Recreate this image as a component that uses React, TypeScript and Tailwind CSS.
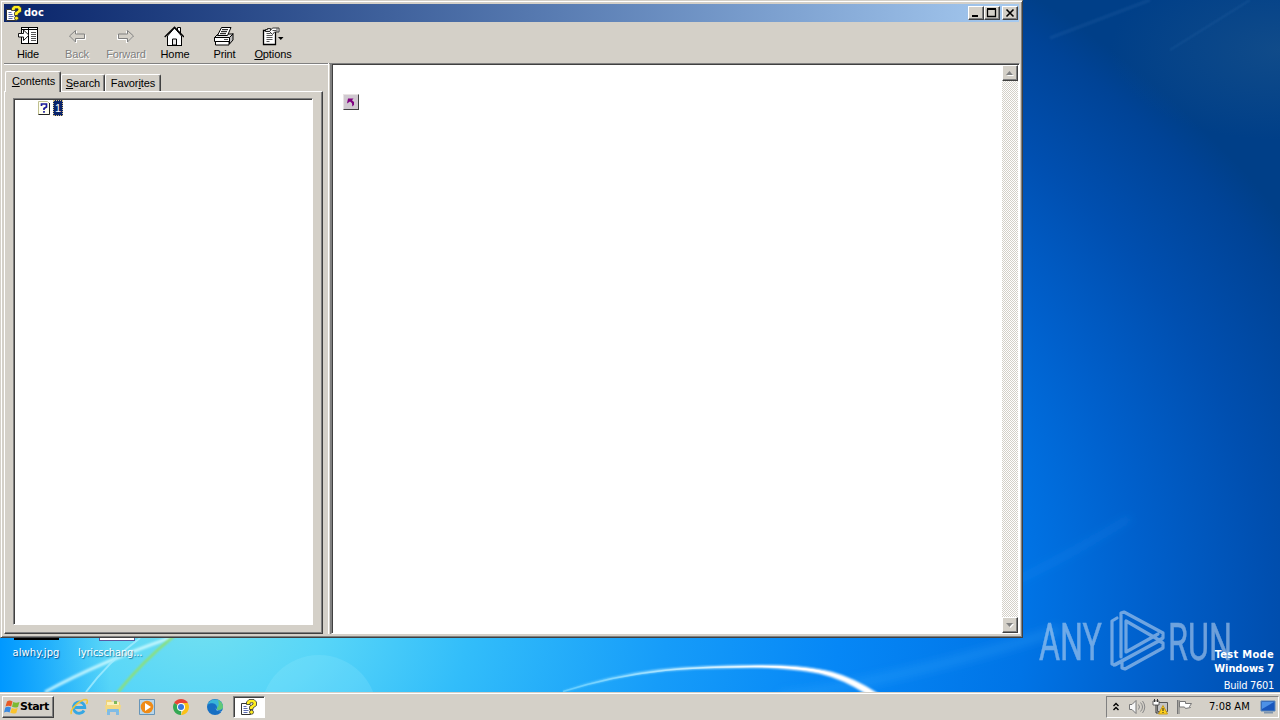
import type { ReactNode } from 'react'

const uiFont = "font-['Liberation_Sans',sans-serif] text-[11px] leading-[13px] tracking-[-0.1px]"
const tahoma = "font-['DejaVu_Sans_Condensed','DejaVu_Sans',sans-serif]"
const raised = 'border border-t-white border-l-white border-r-[#404040] border-b-[#404040] bg-[#d4d0c8] shadow-[inset_-1px_-1px_0_#808080]'
const sunken = 'border border-t-[#808080] border-l-[#808080] border-r-white border-b-white shadow-[inset_1px_1px_0_#404040]'

// Yellow question mark over a page, used by the title bar and the taskbar
function HelpIcon() {
  return (
    <svg width="17" height="16" viewBox="0 0 17 16" className="shrink-0">
      <path d="M.500 4.500h7l2 2v9h-9z" fill="#fff" stroke="#333" />
      <path d="M2.500 7.500h3M2.500 9.500h4M2.500 11.500h5M2.500 13.500h4" stroke="#5a6ab0" />
      <path d="M5.500 5.500V3l2.500-2.500h5L15.500 3v3.500l-3.500 2.500v1.500H8.500V7.500L12 5.200V3.800h-2.800v1.700z" fill="#ffee20" stroke="#333" strokeWidth=".8" />
      <circle cx="10.500" cy="13.200" r="2" fill="#ffee20" stroke="#333" strokeWidth=".8" />
    </svg>
  )
}

function HideIcon() {
  return (
    <svg width="20" height="20" viewBox="0 0 20 20">
      <g shapeRendering="crispEdges">
        <path d="M3 1h17v17H3z" fill="#fff" />
        <path d="M3.500 1.500h16v16h-16zM10.500 1v16M3 3.500h17" fill="none" stroke="#000" />
        <path d="M13 6.500h5M13 8.500h5M13 10.500h5M13 12.500h5M13 14.500h5" stroke="#555" />
        <path d="M0 7h4v4H0z" fill="#d4d0c8" />
      </g>
      <path d="M.500 7.500h5V4l5.500 5.200-5.500 5.300V11h-5z" fill="#fff" stroke="#000" strokeWidth=".9" />
    </svg>
  )
}

function ArrowIcon({ flip }: { flip?: boolean }) {
  return (
    <svg width="20" height="20" viewBox="0 0 20 20" className={flip ? '-scale-x-100' : ''}>
      <path d="M3.500 11l6-6v4h9v4.500h-9V17z" fill="none" stroke="#fff" />
      <path d="M2.500 10l6-5.500v3.500h9v4.500h-9v3.500z" fill="#d4d0c8" stroke="#808080" />
    </svg>
  )
}

function HomeIcon() {
  return (
    <svg width="20" height="20" viewBox="0 0 20 20" className="-ml-[2px]">
      <path d="M13.500 6V1.500h3V9" fill="#fff" stroke="#000" />
      <path d="M3.500 10v9.500h14V10l-7-8z" fill="#fff" stroke="#000" />
      <path d="M.700 11L10.500 1.200 20 11" fill="none" stroke="#000" strokeWidth="1.300" />
      <path d="M8.500 19v-6h4v6z" fill="#e8e8e8" stroke="#000" />
      <path d="M3 19.500h15" stroke="#000" />
    </svg>
  )
}

function PrintIcon() {
  return (
    <svg width="21" height="20" viewBox="0 0 21 20" className="-ml-[2px]">
      <path d="M16.500 11.500l3.500-4v6.500l-3.500 4z" fill="#bbb" stroke="#000" />
      <path d="M1.500 11.500l3.500-3.500h15l-3.500 3.500z" fill="#e4e4e4" stroke="#000" />
      <path d="M4.500 9.500l4-8h9.500l-3.500 8z" fill="#fff" stroke="#000" />
      <path d="M9 3.700h6M8 5.700h6M7 7.700h6" stroke="#000" />
      <path d="M1.500 11.500h15v4h-15z" fill="#fff" stroke="#000" />
      <path d="M2.500 15.500h13.500v3.500H2.500z" fill="#fff" stroke="#000" />
      <path d="M11 13.500h4" stroke="#555" />
    </svg>
  )
}

function OptionsIcon() {
  return (
    <svg width="22" height="20" viewBox="0 0 22 20" className="-ml-px">
      <path d="M1.500 4.500h12v14h-12z" fill="#fff" stroke="#000" strokeWidth="1.300" />
      <path d="M4.500 7.500h4M4.500 9.500h6M4.500 11.500h6M4.500 13.500h6M4.500 15.500h3" stroke="#444" strokeWidth=".9" />
      <path d="M3.500 5.500v-2h2v-1h3v3z" fill="#ddd" stroke="#000" strokeWidth=".8" />
      <path d="M7.500 5.500l3-3.500h6.500v4h-4.500l-2 2.500z" fill="#fff" stroke="#222" strokeWidth=".9" />
      <path d="M15 2v4M10.500 4.500h4" stroke="#555" />
      <path d="M16 11h5.500l-2.700 3z" fill="#000" />
    </svg>
  )
}

function ToolButton({ icon, children, disabled, width }: { icon: ReactNode; children: ReactNode; disabled?: boolean; width: string }) {
  return (
    <button className={`flex flex-col items-center ${width} ${disabled ? 'text-[#808080] [text-shadow:1px_1px_0_#fff]' : 'text-black'}`}>
      <span className="flex h-[22px]">{icon}</span>
      <span className={`${uiFont} whitespace-nowrap`}>{children}</span>
    </button>
  )
}

function TitleButton({ children }: { children: ReactNode }) {
  return (
    <button className={`h-[14px] w-4 ${raised}`}>
      <svg width="14" height="12" viewBox="0 0 14 12" fill="none" stroke="#000">{children}</svg>
    </button>
  )
}

function ScrollButton({ down }: { down?: boolean }) {
  return (
    <button className={`flex h-4 w-4 items-center justify-center ${raised}`}>
      {down ? (
        <svg width="8" height="5" viewBox="0 0 8 5">
          <path d="M1 1h7L4.500 5z" fill="#fff" />
          <path d="M0 0h7L3.500 4z" fill="#808080" />
        </svg>
      ) : (
        <svg width="8" height="5" viewBox="0 0 8 5">
          <path d="M1 5h7L4.500 1z" fill="#fff" />
          <path d="M0 4h7L3.500 0z" fill="#808080" />
        </svg>
      )}
    </button>
  )
}

function Tab({ children, width, active }: { children: ReactNode; width: string; active?: boolean }) {
  return (
    <div
      className={`${uiFont} ${width} flex justify-center whitespace-nowrap rounded-t-[2px] border-t border-r border-l border-t-white border-r-[#404040] border-l-white bg-[#d4d0c8] shadow-[inset_-1px_0_0_#808080] ${
        active ? 'relative -mb-px h-[21px] pt-[3px] pl-px' : 'h-[17px] pt-[2px]'
      }`}
    >
      <span>{children}</span>
    </div>
  )
}

function HelpWindow() {
  return (
    <div className="absolute top-0 left-0 flex h-[638px] w-[1023px] flex-col border border-t-[#d4d0c8] border-r-[#404040] border-b-[#404040] border-l-[#d4d0c8] bg-[#d4d0c8] px-[3px] pt-[3px] pb-[3px] shadow-[inset_1px_1px_0_#fff,inset_-1px_-1px_0_#808080]">
      {/* Title bar */}
      <div className="flex h-[18px] shrink-0 items-center bg-linear-to-r from-[#0a246a] to-[#a6caf0] pr-px pl-[2px]">
        <HelpIcon />
        <span className={`ml-px flex-1 ${tahoma} text-[11px] leading-[18px] font-bold text-white`}>doc</span>
        <TitleButton><path d="M3 9h6" strokeWidth="2" /></TitleButton>
        <TitleButton><path d="M2.500 2v7.500h8V2M2 2h9" strokeWidth="1.300" /><path d="M2 2h9" strokeWidth="2" /></TitleButton>
        <div className="ml-[2px] flex"><TitleButton><path d="M3.500 2.500l7 7M10.500 2.500l-7 7" strokeWidth="1.600" /></TitleButton></div>
      </div>

      {/* Toolbar */}
      <div className="flex h-[42px] shrink-0 border-b border-[#808080] pt-1">
        <ToolButton width="w-12" icon={<HideIcon />}>Hide</ToolButton>
        <ToolButton width="w-[50px]" icon={<ArrowIcon />} disabled>Back</ToolButton>
        <ToolButton width="w-12" icon={<ArrowIcon flip />} disabled>Forward</ToolButton>
        <ToolButton width="w-[50px]" icon={<HomeIcon />}>Home</ToolButton>
        <ToolButton width="w-[49px]" icon={<PrintIcon />}>Print</ToolButton>
        <ToolButton width="w-12" icon={<OptionsIcon />}><u>O</u>ptions</ToolButton>
      </div>

      <div className="flex min-h-0 flex-1">
        {/* Navigation pane */}
        <div className="flex w-[324px] flex-col border-t border-white pt-[6px]">
          <div className="flex h-5 items-end pl-px">
            <Tab width="w-[56px]" active><u>C</u>ontents</Tab>
            <Tab width="w-[44px]"><u>S</u>earch</Tab>
            <Tab width="w-[56px]">Favor<u>i</u>tes</Tab>
          </div>
          <div className="mr-[5px] flex flex-1 border border-t-white border-r-[#404040] border-b-[#404040] border-l-white pt-[6px] pr-[9px] pb-2 pl-2 shadow-[inset_-1px_-1px_0_#808080]">
            <div className={`flex flex-1 items-start bg-white pt-px pl-[24px] ${sunken}`}>
              <svg width="12" height="15" viewBox="0 0 12 15">
                <path d="M.500 1.500h9l2 2v11H.500z" fill="#fffff0" stroke="#c0c090" />
                <path d="M11.500 3v11.500H.500" fill="none" stroke="#222" />
                <path d="M3.500 6V4h5v3L6 8.500v1.500M6 11v1.700" fill="none" stroke="#1a1a9a" strokeWidth="1.700" />
              </svg>
              <span className={`${uiFont} ml-[3px] h-[16px] w-[10px] border border-dotted border-[#d8c080] bg-[#0a246a] text-center leading-[14px] text-white`}>1</span>
            </div>
          </div>
        </div>

        {/* Splitter */}
        <div className="-mt-px w-[3px] border-r border-l border-r-[#808080] border-l-white" />

        {/* Topic pane */}
        <div className={`-mt-px -mr-px flex flex-1 bg-white ${sunken}`}>
          <div className="flex-1 pt-[30px] pl-[11px]">
            <div className="flex h-4 w-4 items-center justify-center border border-t-[#e8e4e4] border-r-[#404040] border-b-[#404040] border-l-[#e8e4e4] bg-[#d0c8d0]">
              <svg width="10" height="10" viewBox="0 0 10 10">
                <path d="M1 6.500L2 1.500h5.500L6 3.200 8 5v3L6 9.500Q7 6 4 4.500z" fill="#800080" />
              </svg>
            </div>
          </div>
          <div className="mt-px mr-px flex w-4 flex-col justify-between bg-[repeating-conic-gradient(#d4d0c8_0_25%,#fff_0_50%)] bg-[length:2px_2px]">
            <ScrollButton />
            <ScrollButton down />
          </div>
        </div>
      </div>
    </div>
  )
}

function Wallpaper() {
  return (
    <svg width="1280" height="720" viewBox="0 0 1280 720" className="absolute inset-0">
      <defs>
        <radialGradient id="sky" gradientUnits="userSpaceOnUse" cx="200" cy="898" r="1230" gradientTransform="scale(1 .690)">
          <stop offset="0" stopColor="#72e0f0" />
          <stop offset=".100" stopColor="#58d6f8" />
          <stop offset=".220" stopColor="#32bdfa" />
          <stop offset=".380" stopColor="#169cf9" />
          <stop offset=".520" stopColor="#0687f6" />
          <stop offset=".670" stopColor="#0074e6" />
          <stop offset=".770" stopColor="#0060cc" />
          <stop offset=".870" stopColor="#004fb0" />
          <stop offset=".965" stopColor="#004396" />
          <stop offset="1.000" stopColor="#003f88" />
        </radialGradient>
        <linearGradient id="edge" x1="0" x2="1">
          <stop offset="0" stopColor="#0098ff" />
          <stop offset="1" stopColor="#0098ff" stopOpacity="0" />
        </linearGradient>
        <radialGradient id="corner">
          <stop offset="0" stopColor="#144e8a" stopOpacity=".8" />
          <stop offset="1" stopColor="#144e8a" stopOpacity="0" />
        </radialGradient>
        <linearGradient id="arc" gradientUnits="userSpaceOnUse" x1="560" x2="780" y1="0" y2="0">
          <stop offset="0" stopColor="#5ecbff" />
          <stop offset="1" stopColor="#fff" />
        </linearGradient>
        <filter id="soft"><feGaussianBlur stdDeviation="1" /></filter>
        <filter id="softer" x="-20%" y="-50%" width="140%" height="200%"><feGaussianBlur stdDeviation="4" /></filter>
      </defs>
      <rect width="1280" height="720" fill="url(#sky)" />
      <rect y="630" width="110" height="70" fill="url(#edge)" />
      <ellipse cx="1280" cy="50" rx="170" ry="90" fill="url(#corner)" />
      <path d="M1170 50L1250 0" stroke="#4a88c0" strokeOpacity=".35" filter="url(#soft)" />
      <path d="M1050 38L1150 0" stroke="#4a88c0" strokeOpacity=".15" strokeWidth="3" filter="url(#soft)" />
      <path d="M1010 584Q1070 555 1130 518" stroke="#3ca4ff" strokeOpacity=".2" strokeWidth="5" fill="none" filter="url(#softer)" />
      <path d="M780 697Q900 680 1060 630" stroke="#50b8ff" strokeOpacity=".2" strokeWidth="10" fill="none" filter="url(#softer)" />
      <circle cx="319" cy="713" r="58" fill="#b0f0ff" fillOpacity=".16" />
      <path d="M45 692Q100 662 170 638" stroke="#d4fbff" strokeOpacity=".85" strokeWidth="3" fill="none" filter="url(#soft)" />
      <path d="M86 692Q108 662 140 638" stroke="#a4ecff" strokeOpacity=".8" strokeWidth="2" fill="none" />
      <path d="M118 692Q142 662 174 636" stroke="#90e070" strokeWidth="2.500" fill="none" filter="url(#soft)" />
      <path d="M563 691.500C640 667 700 667.500 757 667C810 668.500 835 673 867 694L878 694C848 675 825 665 757 665.500C690 667 640 666 563 691.500z" fill="url(#arc)" stroke="url(#arc)" strokeWidth="1.200" filter="url(#soft)" />
      <path d="M563 691.500C640 667 700 667 757 666.500C812 667 838 672 872 693" fill="none" stroke="url(#arc)" strokeWidth="1.500" />
    </svg>
  )
}

function AnyRunLogo() {
  return (
    <svg width="245" height="92" viewBox="1035 600 245 92" className="absolute top-[600px] left-[1035px]" opacity=".55">
      <g fill="#c8dcf2" stroke="#c8dcf2" strokeWidth=".5" fontFamily="Roboto, sans-serif" fontSize="52">
        <text x="1039" y="659.500" textLength="63" lengthAdjust="spacingAndGlyphs">ANY</text>
        <text x="1168" y="659.500" textLength="64" lengthAdjust="spacingAndGlyphs">RUN</text>
      </g>
      <path
        d="M1117 618l-5 3v43l3 1 47-26M1121 657V613l3-1 39 21v5l-4 2-33-19v31l32-18M1122 662v6l3 1 38-21v-5l-4-2-45 24"
        fill="none"
        stroke="#c8dcf2"
        strokeWidth="3.200"
        strokeLinejoin="round"
        strokeLinecap="round"
      />
    </svg>
  )
}

function Taskbar() {
  return (
    <div className="relative mt-auto flex h-7 items-start border-t border-[#d4d0c8] bg-[#d4d0c8] pt-[3px] pl-[2px] shadow-[inset_0_1px_0_#fff]">
      <button className={`flex h-[22px] w-[52px] items-center ${raised} pl-px font-['DejaVu_Sans',sans-serif] text-[11px] leading-5 font-bold tracking-[-0.5px]`}>
        <svg width="16" height="16" viewBox="0 0 16 16" className="shrink-0">
          <path d="M3 2.500Q5.500 .500 8.500 2.500L7.200 7.500Q4.500 5.800 1.500 7.500z" fill="#e85a24" />
          <path d="M9.200 3Q12 4.500 15.500 3L14 8Q11 9.300 8 7.800z" fill="#7cba32" />
          <path d="M1.300 8.500Q4 6.800 7 8.500L5.600 13.500Q3 12 0 13.500z" fill="#3a8ae0" />
          <path d="M7.800 9Q10.500 10.300 13.700 9L12.300 14Q9.500 15.200 6.300 13.800z" fill="#fac32d" />
        </svg>
        Start
      </button>

      {/* Quick launch */}
      <div className="ml-[16px] flex items-center gap-4 pt-[2px]">
        <svg width="18" height="18" viewBox="0 0 18 18">
          <path d="M14 12.500A5.700 5.700 0 1 1 14.800 9.500H5" fill="none" stroke="#35a7e3" strokeWidth="2.800" />
          <path d="M1.500 16C-1 12 10 1.500 16 1.500q2.500 .500 .500 4.500" fill="none" stroke="#f4c735" strokeWidth="1.600" />
        </svg>
        <svg width="18" height="18" viewBox="0 0 18 18">
          <path d="M2 2h5l1 2h8v10H2z" fill="#f0d377" />
          <path d="M3 4h12v7H3z" fill="#faf0bd" />
          <path d="M10 3h3v3h-3z" fill="#7db85a" />
          <path d="M1 7h16l-1 7H2z" fill="#f4d982" />
          <path d="M3 17v-5q0-1 1-1h10q1 0 1 1v5h-3v-3H6v3z" fill="#80bce5" />
        </svg>
        <svg width="18" height="18" viewBox="0 0 18 18">
          <path d="M1.500 1.500h15v15h-15z" fill="#b9d6ea" stroke="#6795b8" />
          <circle cx="9" cy="9" r="6.300" fill="#ef8b17" />
          <path d="M7 5l6 4-6 4z" fill="#fff" />
        </svg>
        <svg width="18" height="18" viewBox="0 0 18 18">
          <path d="M9 9L2.100 5A8 8 0 0 1 15.900 5z" fill="#e94335" />
          <path d="M9 9L2.100 5A8 8 0 0 0 9 17z" fill="#34a853" />
          <path d="M9 9h3.500L9 17A8 8 0 0 0 15.900 5H9z" fill="#fbc116" />
          <circle cx="9" cy="9" r="4" fill="#fff" />
          <circle cx="9" cy="9" r="3" fill="#3878dd" />
        </svg>
        <svg width="18" height="18" viewBox="0 0 18 18">
          <circle cx="9" cy="9" r="8" fill="#176fc3" />
          <path d="M1.500 7A8 8 0 0 1 17 8q.500 4-5 4-2-.500-1-2.500C11 5 4 4 1.500 7z" fill="#39b5d9" />
          <path d="M12 2q5 2 5 7 0 3-5 3-2-.500-1-2 3-3 1-8z" fill="#61c878" />
          <path d="M10 9q-1 4 5 4h1q1-.500 .500 .500L13 13q-4 0-3-4z" fill="#d4e9f5" />
        </svg>
      </div>

      <button className={`ml-[9px] flex h-[22px] w-8 items-center justify-center bg-white ${sunken}`}><HelpIcon /></button>

      {/* Notification area */}
      <div className="mr-px ml-auto flex h-[22px] w-[173px] items-center border border-t-[#808080] border-r-white border-b-white border-l-[#808080] pl-[5px]">
        <svg width="8" height="10" viewBox="0 0 8 10" fill="none" stroke="#000" strokeWidth="1.400"><path d="M1.500 4l2.500-2.500L6.500 4M1.500 8l2.500-2.500L6.500 8" /></svg>
        <svg width="18" height="18" viewBox="0 0 18 18" className="ml-2">
          <path d="M1.500 6.500H4l4-4v13l-4-4H1.500z" fill="#f8f8f8" stroke="#777" />
          <path d="M10.500 6.500q2 2.500 0 5M12.500 4.500q4 4.500 0 9M14.500 3q4.500 6 0 12" fill="none" stroke="#888" />
        </svg>
        <svg width="17" height="18" viewBox="0 0 17 18" className="ml-[6px]">
          <path d="M5.500 4.500h10v9h-10z" fill="#c4c4c4" stroke="#555" />
          <path d="M1 3h6v4H1z" fill="#fff" stroke="#444" strokeWidth=".8" />
          <path d="M2.500 1v3M5.500 1v3M4 7v8h5" fill="none" stroke="#333" />
          <path d="M11 7.500L15.500 16h-9z" fill="#ffd21c" stroke="#c89a18" />
          <path d="M11 10v3M11 14v1" stroke="#222" />
        </svg>
        <svg width="18" height="18" viewBox="0 0 18 18" className="ml-[6px]">
          <path d="M2.500 2v14M4 2v14" stroke="#777" />
          <path d="M4.500 3.500h6v2h6l-2 3 1 1-5 1-1-1.500h-5z" fill="#fff" stroke="#777" />
        </svg>
        <span className={`ml-[16px] w-[43px] ${tahoma} text-[11px] leading-[18px] whitespace-nowrap`}>7:08 AM</span>
        <svg width="16" height="14" viewBox="0 0 16 14" className="ml-2">
          <path d="M1 1h14v10H1z" fill="#1856bc" stroke="#5b87b9" />
          <path d="M2 2h12L2 9z" fill="#4d91e6" />
          <path d="M4 12.500h9" stroke="#8096ae" strokeWidth="2" />
        </svg>
      </div>
    </div>
  )
}

export default function App() {
  return (
    <div className="relative flex h-[720px] w-[1280px] flex-col overflow-hidden bg-[#005cc8]">
      <Wallpaper />

      {/* Desktop icons, mostly hidden behind the window */}
      <div className={`absolute top-[619px] left-[12px] flex w-12 flex-col items-center ${tahoma} text-[11px] text-white [text-shadow:1px_1px_1px_#064e8c]`}>
        <div className="h-[21px] w-[45px] bg-black" />
        <span className="mt-[5px] leading-4 tracking-[0.1px]">alwhy.jpg</span>
      </div>
      <div className={`absolute top-[619px] left-[78px] flex w-[78px] flex-col items-center ${tahoma} text-[11px] text-white [text-shadow:1px_1px_1px_#16769c]`}>
        <div className="h-[22px] w-[36px] border border-[#5a5aa0] bg-white" />
        <span className="mt-1 self-start leading-4 tracking-[-0.1px] whitespace-nowrap">lyricschang...</span>
      </div>

      <HelpWindow />
      <AnyRunLogo />
      <div className={`absolute top-[648px] right-[6px] text-right ${tahoma} text-[11px] leading-[14px] text-white`}>
        <p className="font-bold tracking-[0.3px]">Test Mode</p>
        <p className="font-bold tracking-[-0.1px]">Windows 7</p>
        <p className="pt-[3px] tracking-[-0.3px]">Build 7601</p>
      </div>
      <Taskbar />
    </div>
  )
}
